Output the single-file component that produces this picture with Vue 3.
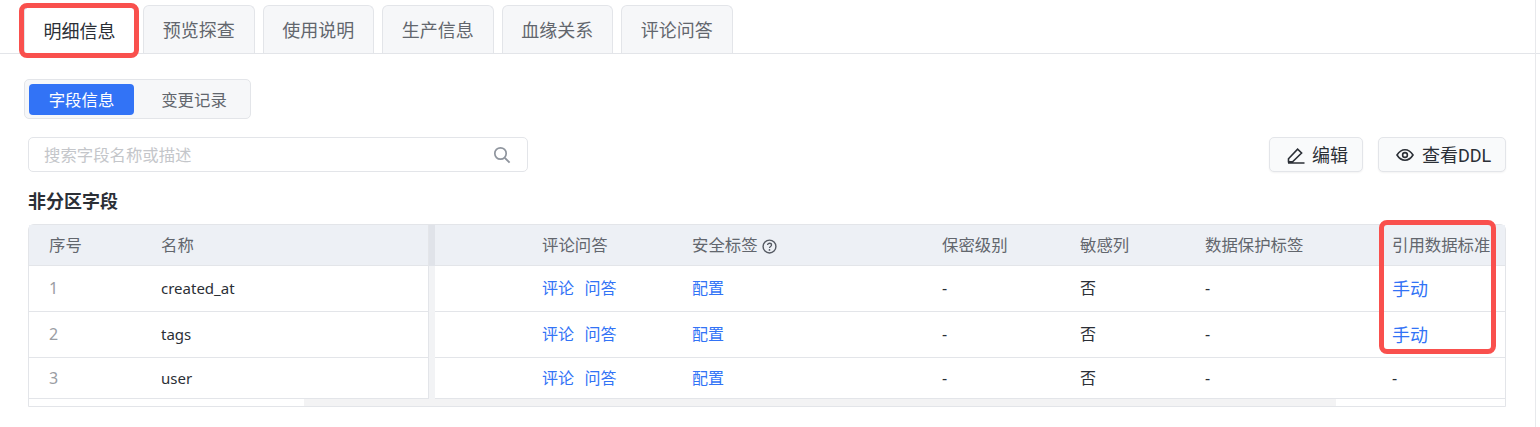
<template>
  <div class="page">
    <div class="tabs">
      <div
        v-for="(t, i) in tabs"
        :key="t"
        class="tab"
        :class="{ active: i === 0 }"
      >
        {{ t }}
        <span v-if="i === 0" class="mark mark-tab"></span>
      </div>
    </div>

    <div class="body">
      <div class="segment">
        <div class="seg-item on">字段信息</div>
        <div class="seg-item">变更记录</div>
      </div>

      <div class="toolbar">
        <div class="search">
          <span class="placeholder">搜索字段名称或描述</span>
          <svg class="search-icon" viewBox="0 0 18 18" width="18" height="18">
            <circle cx="7.5" cy="7.5" r="5.7" fill="none" stroke="#8f959e" stroke-width="1.7" />
            <path d="M11.8 11.8 L16.6 16.6" stroke="#8f959e" stroke-width="1.9" />
          </svg>
        </div>
        <div class="actions">
          <button class="btn btn-edit">
            <svg viewBox="0 0 18 18" width="18" height="18">
              <path d="M1.5 12.8 L10.6 3.2 L14.6 7 L5.6 15.8 H1.5 Z M1 17 H17.5" fill="none" stroke="#2b2f36" stroke-width="1.6" />
            </svg>
            <span class="btn-text">编辑</span>
          </button>
          <button class="btn btn-ddl">
            <svg viewBox="0 0 18 18" width="18" height="18">
              <path d="M1 9 C3.5 5 6 3.8 9 3.8 C12 3.8 14.5 5 17 9 C14.5 13 12 14.2 9 14.2 C6 14.2 3.5 13 1 9 Z" fill="none" stroke="#2b2f36" stroke-width="1.6" />
              <circle cx="9" cy="9" r="2.4" fill="none" stroke="#2b2f36" stroke-width="1.6" />
            </svg>
            <span class="btn-text">查看DDL</span>
          </button>
        </div>
      </div>

      <div class="section-title">非分区字段</div>

      <div class="table-wrap">
        <table>
          <colgroup>
            <col v-for="w in colWidths" :key="w.k" :style="{ width: w.v + 'px' }" />
          </colgroup>
          <thead>
            <tr>
              <th>序号</th>
              <th class="fixed-edge">名称</th>
              <th></th>
              <th>评论问答</th>
              <th>
                安全标签
                <svg class="help" viewBox="0 0 14 14" width="15" height="15">
                  <circle cx="7" cy="7" r="6" fill="none" stroke="#555a63" stroke-width="1.3" />
                  <path d="M5.2 5.6 C5.2 3.4 8.9 3.5 8.9 5.5 C8.9 6.9 7 6.9 7 8.4" fill="none" stroke="#555a63" stroke-width="1.2" />
                  <circle cx="7" cy="10.2" r="0.8" fill="#555a63" />
                </svg>
              </th>
              <th>保密级别</th>
              <th>敏感列</th>
              <th>数据保护标签</th>
              <th>引用数据标准</th>
            </tr>
          </thead>
          <tbody>
            <tr v-for="r in rows" :key="r.no" :class="{ tall: r.h > 41 }" :style="{ height: r.h + 'px' }">
              <td class="no">{{ r.no }}</td>
              <td class="fixed-edge name">{{ r.name }}</td>
              <td></td>
              <td class="link"><span class="gap">评论</span>问答</td>
              <td class="link">配置</td>
              <td>-</td>
              <td class="cjk">否</td>
              <td>-</td>
              <td :class="r.manual ? 'manual' : ''">{{ r.manual ? '手动' : '-' }}</td>
            </tr>
          </tbody>
        </table>
        <div class="scrollbar"><div class="thumb"></div></div>
        <span class="mark mark-col"></span>
      </div>
    </div>
    <div class="edge"></div>
  </div>
</template>

<script setup>
const tabs = ['明细信息', '预览探查', '使用说明', '生产信息', '血缘关系', '评论问答']

const colWidths = [
  { k: 'no', v: 112 },
  { k: 'name', v: 291 },
  { k: 'blank', v: 90 },
  { k: 'comment', v: 150 },
  { k: 'security', v: 250 },
  { k: 'secret', v: 138 },
  { k: 'sensitive', v: 125 },
  { k: 'protect', v: 187 },
  { k: 'standard', v: 133 },
]

const rows = [
  { no: 1, name: 'created_at', manual: true, h: 46 },
  { no: 2, name: 'tags', manual: true, h: 46 },
  { no: 3, name: 'user', manual: false, h: 41 },
]
</script>

<style>
html,
body {
  background: #fff;
}
</style>

<style scoped>
.page {
  position: relative;
  width: 1540px;
  height: 427px;
  overflow: hidden;
  background: #fff;
  font-family: "Noto Sans", "Noto Sans CJK SC", sans-serif;
  color: #2b2f36;
}
.tabs {
  display: flex;
  gap: 8px;
  height: 54px;
  padding: 5px 0 0 24px;
  box-sizing: border-box;
  border-bottom: 1px solid #e3e5e9;
}
.tab {
  position: relative;
  width: 111.5px;
  height: 48px;
  box-sizing: border-box;
  background: #f6f7f9;
  border: 1px solid #e3e5e9;
  border-bottom: none;
  border-radius: 6px 6px 0 0;
  font-size: 18px;
  line-height: 48px;
  text-align: center;
  color: #62666d;
}
.tab.active {
  width: 111px;
  background: #fff;
  color: #2b2f36;
  border-top: 2px solid #3273f6;
}
.mark {
  position: absolute;
  border: 5px solid #f9504d;
  border-radius: 8px;
  box-sizing: border-box;
  pointer-events: none;
}
.mark-tab {
  left: -6px;
  top: -4px;
  width: 120px;
  height: 55px;
}
.body {
  padding: 25px 34px 0 24px;
}
.segment {
  display: flex;
  width: 227px;
  height: 40px;
  box-sizing: border-box;
  padding: 4px;
  background: #f6f7f9;
  border: 1px solid #e3e5e9;
  border-radius: 5px;
}
.seg-item {
  flex: none;
  width: 105px;
  height: 31px;
  box-sizing: border-box;
  font-size: 16.4px;
  line-height: 31px;
  text-align: center;
  color: #62666d;
  border-radius: 4px;
}
.seg-item + .seg-item {
  width: 112px;
  padding-left: 8px;
}
.seg-item.on {
  background: #3273f6;
  color: #fff;
}
.toolbar {
  display: flex;
  justify-content: space-between;
  margin: 18px 0 0 4px;
}
.search {
  display: flex;
  align-items: center;
  justify-content: space-between;
  width: 500px;
  height: 35px;
  box-sizing: border-box;
  padding: 0 16px 0 15px;
  border: 1px solid #e3e5e9;
  border-radius: 5px;
}
.placeholder {
  padding-bottom: 2px;
  font-size: 16.4px;
  color: #c4c6ca;
}
.actions {
  display: flex;
  gap: 15px;
}
.btn {
  display: flex;
  align-items: center;
  height: 35px;
  box-sizing: border-box;
  gap: 8px;
  background: #f9fafb;
  border: 1px solid #e3e5e9;
  border-radius: 5px;
  box-shadow: 0 1px 2px rgba(0, 0, 0, 0.05);
  font-family: Roboto, "Noto Sans CJK SC", sans-serif;
  font-size: 18px;
  color: #2b2f36;
  padding: 0 0 0 17px;
}
.btn-text {
  padding-bottom: 2px;
}
.btn-edit {
  width: 94px;
  gap: 7px;
}
.btn-ddl {
  width: 128px;
}
.section-title {
  margin: 16px 0 0 4px;
  height: 26px;
  font-size: 18px;
  line-height: 26px;
  font-weight: 700;
  color: #2b2f36;
}
.table-wrap {
  position: relative;
  margin: 10px 0 0 4px;
  width: 1478px;
  box-sizing: border-box;
  border: 1px solid #e3e5e9;
  border-radius: 6px 6px 0 0;
}
table {
  table-layout: fixed;
  width: 1476px;
  border-collapse: collapse;
}
th {
  height: 38px;
  padding: 0 0 2px 20px;
  background: #edf0f5;
  border-bottom: 1px solid #e3e5e9;
  font-size: 16.4px;
  font-weight: 400;
  text-align: left;
  color: #62666d;
  white-space: nowrap;
}
td {
  padding: 0 0 0 20px;
  border-bottom: 1px solid #e3e5e9;
  font-size: 16px;
  color: #2b2f36;
  white-space: nowrap;
}
.tall td {
  padding-bottom: 2px;
}
td.link,
td.cjk {
  padding-bottom: 2px;
}
.tall td.link,
.tall td.cjk {
  padding-bottom: 4px;
}
.fixed-edge {
  border-right: 6px solid #f2f3f5;
  box-shadow: inset -1px 0 0 #e3e5e9;
}
th.fixed-edge {
  border-right-color: #e0e3e9;
}
.no {
  color: #9a9da3;
}
.name {
  font-size: 15px;
}
.link {
  color: #3273f6;
}
.gap {
  margin-right: 10.5px;
}
.manual {
  color: #3273f6;
  font-size: 18px;
}
.help {
  vertical-align: -3px;
}
.scrollbar {
  height: 7px;
}
.thumb {
  width: 1032px;
  height: 7px;
  margin-left: 275px;
  background: #f3f3f4;
}
.mark-col {
  right: 9px;
  top: -5px;
  width: 117px;
  height: 134px;
}
.edge {
  position: absolute;
  right: 4px;
  top: 0;
  width: 1px;
  height: 427px;
  background: #e8e9ec;
}
</style>
